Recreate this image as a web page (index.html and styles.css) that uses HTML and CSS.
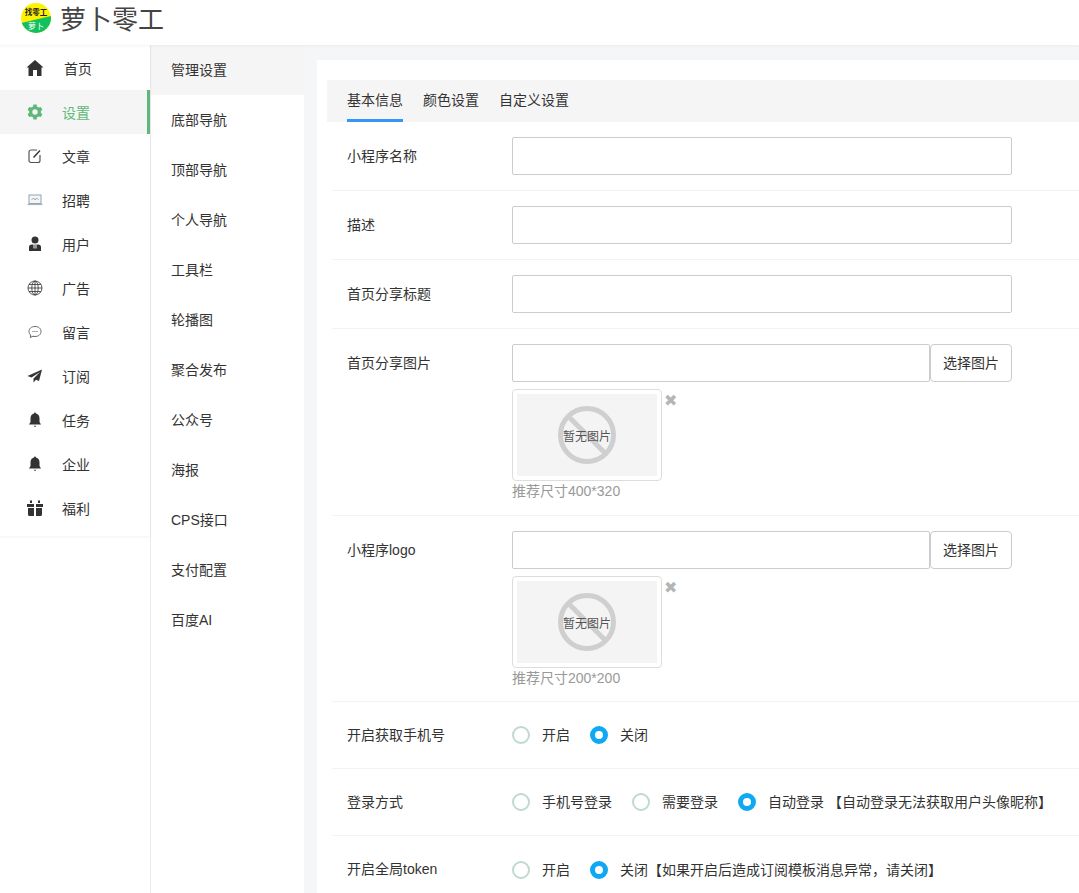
FILE: index.html
```html
<!DOCTYPE html>
<html lang="zh">
<head>
<meta charset="utf-8">
<title>萝卜零工</title>
<link rel="stylesheet" href="styles.css">
</head>
<body>
<header class="topbar">
  <svg class="logo" viewBox="0 0 30 30" width="30" height="30"><defs><clipPath id="c"><circle cx="15" cy="15" r="15"/></clipPath></defs><g clip-path="url(#c)"><rect width="30" height="30" fill="#fff200"/><path d="M0 20 30 13V30H0Z" fill="#12c05e"/></g><text x="15" y="12" class="logo-a">找零工</text><text x="15" y="26" class="logo-b">萝卜</text></svg>
  <span class="brand">萝卜零工</span>
</header>
<div class="shell">
  <nav class="nav1">
    <div class="nav1-list">
    <a class="nav1-item"><svg class="ico ico-home" viewBox="0 0 18 18"><path d="M9 1 0.500 8.500 2.500 8.500V17H7V11H11V17H15.500V8.500H17.500Z" fill="#333"/></svg><span class="home-label">首页</span></a>
    <a class="nav1-item active"><svg class="ico" viewBox="0 0 18 18"><path fill-rule="evenodd" d="M7.400 1.500h3.200l.5 2.200 1.600.9 2.100-.7 1.600 2.800-1.600 1.500v1.600l1.600 1.500-1.600 2.800-2.100-.7-1.600.9-.5 2.200H7.400l-.5-2.200-1.600-.9-2.100.7-1.600-2.800 1.600-1.500V8.200L1.600 6.700l1.600-2.800 2.100.7 1.600-.9ZM9 6.300a2.700 2.700 0 1 0 0 5.400 2.700 2.700 0 0 0 0-5.400Z" fill="#5fb878"/></svg><span>设置</span></a>
    <a class="nav1-item"><svg class="ico" viewBox="0 0 18 18"><path d="M14 8v5.500a2 2 0 0 1-2 2H5a2 2 0 0 1-2-2V5a2 2 0 0 1 2-2h6" fill="none" stroke="#555" stroke-width="1.200"/><path d="M7.500 10.500 14 3.500" stroke="#333" stroke-width="1.400"/></svg><span>文章</span></a>
    <a class="nav1-item"><svg class="ico" viewBox="0 0 18 18"><rect x="3" y="4" width="12" height="8.500" fill="#f3f6f8" stroke="#8fa3b5"/><path d="M1.500 13.500h15" stroke="#aab4bd" stroke-width="1.200"/><path d="M5.500 9 7.500 7 9 9 10.500 7 12.500 9" fill="none" stroke="#888" stroke-width=".7"/></svg><span>招聘</span></a>
    <a class="nav1-item"><svg class="ico" viewBox="0 0 18 18"><circle cx="9" cy="5" r="3.500" fill="#333"/><path d="M3 16V12Q3 9.500 6 9.500H7.500V13.500H8.500V9.500H9.500V13.500H10.500V9.500H12Q15 9.500 15 12V16Z" fill="#333"/></svg><span>用户</span></a>
    <a class="nav1-item"><svg class="ico" viewBox="0 0 18 18"><g fill="none" stroke="#444" stroke-width=".9"><circle cx="9" cy="9" r="7"/><ellipse cx="9" cy="9" rx="3.200" ry="7"/><path d="M9 2V16M2 9H16M3 5.500H15M3 12.500H15"/></g></svg><span>广告</span></a>
    <a class="nav1-item"><svg class="ico" viewBox="0 0 18 18"><path d="M9 3.500C5.400 3.500 3 5.600 3 8.500c0 1.400.6 2.600 1.700 3.500L4.300 14.500 7 13.200c.6.200 1.300.3 2 .3 3.600 0 6-2.100 6-5S12.600 3.500 9 3.500Z" fill="none" stroke="#666"/><path d="M6.500 8.500h1M8.500 8.500h1M10.500 8.500h1" stroke="#555"/></svg><span>留言</span></a>
    <a class="nav1-item"><svg class="ico" viewBox="0 0 18 18"><path d="M16 2.500 1.500 9 5.500 10.500 14 5 7.500 11.500V15.500L10 12.800 13 14Z" fill="#333"/></svg><span>订阅</span></a>
    <a class="nav1-item"><svg class="ico" viewBox="0 0 18 18"><path d="M9 1.500a1 1 0 0 1 1 1C12.500 3 13.500 5 13.500 7.500V11L15 13.500H3L4.500 11V7.500C4.500 5 5.500 3 8 2.500a1 1 0 0 1 1-1Z" fill="#333"/><path d="M7.500 14.800h3L9 16.300Z" fill="#555"/></svg><span>任务</span></a>
    <a class="nav1-item"><svg class="ico" viewBox="0 0 18 18"><path d="M9 1.500a1 1 0 0 1 1 1C12.500 3 13.500 5 13.500 7.500V11L15 13.500H3L4.500 11V7.500C4.500 5 5.500 3 8 2.500a1 1 0 0 1 1-1Z" fill="#333"/><path d="M7.500 14.800h3L9 16.300Z" fill="#555"/></svg><span>企业</span></a>
    <a class="nav1-item"><svg class="ico" viewBox="0 0 18 18"><path d="M1 5H8V8H1ZM10 5H17V8H10ZM2 9H8V17H3.500Q2 17 2 15.500ZM10 9H16V15.500Q16 17 14.500 17H10Z" fill="#333"/><path d="M5 1.500V4M13 1.500V4" stroke="#333" stroke-width="2"/></svg><span>福利</span></a>
    </div>
  </nav>
  <nav class="nav2">
    <a class="nav2-item current">管理设置</a>
    <a class="nav2-item">底部导航</a>
    <a class="nav2-item">顶部导航</a>
    <a class="nav2-item">个人导航</a>
    <a class="nav2-item">工具栏</a>
    <a class="nav2-item">轮播图</a>
    <a class="nav2-item">聚合发布</a>
    <a class="nav2-item">公众号</a>
    <a class="nav2-item">海报</a>
    <a class="nav2-item">CPS接口</a>
    <a class="nav2-item">支付配置</a>
    <a class="nav2-item">百度AI</a>
  </nav>
  <main class="content">
    <section class="card">
      <div class="tabs">
        <a class="tab on">基本信息</a>
        <a class="tab">颜色设置</a>
        <a class="tab">自定义设置</a>
      </div>
      <div class="row"><label class="lbl">小程序名称</label><div class="ctl"><input class="field"></div></div>
      <div class="row"><label class="lbl">描述</label><div class="ctl"><input class="field"></div></div>
      <div class="row"><label class="lbl">首页分享标题</label><div class="ctl"><input class="field"></div></div>
      <div class="row pic-row">
        <label class="lbl">首页分享图片</label>
        <div class="ctl">
          <div class="pick"><input class="field"><button class="pick-btn">选择图片</button></div>
          <div class="thumb-wrap">
            <div class="thumb"><div class="placeholder"><svg class="no-img" viewBox="0 0 60 60" width="60" height="60"><circle cx="30" cy="30" r="26.500" fill="none" stroke="#cfcfcf" stroke-width="5"/><path d="M11 11 49 49" stroke="#cfcfcf" stroke-width="5"/></svg><span class="no-txt">暂无图片</span></div></div>
            <span class="del">✖</span>
          </div>
          <div class="hint">推荐尺寸400*320</div>
        </div>
      </div>
      <div class="row pic-row pic-row-b">
        <label class="lbl">小程序logo</label>
        <div class="ctl">
          <div class="pick"><input class="field"><button class="pick-btn">选择图片</button></div>
          <div class="thumb-wrap">
            <div class="thumb"><div class="placeholder"><svg class="no-img" viewBox="0 0 60 60" width="60" height="60"><circle cx="30" cy="30" r="26.500" fill="none" stroke="#cfcfcf" stroke-width="5"/><path d="M11 11 49 49" stroke="#cfcfcf" stroke-width="5"/></svg><span class="no-txt">暂无图片</span></div></div>
            <span class="del">✖</span>
          </div>
          <div class="hint">推荐尺寸200*200</div>
        </div>
      </div>
      <div class="row radio-row"><label class="lbl">开启获取手机号</label><div class="ctl radios">
        <span class="opt"><i class="dot"></i>开启</span><span class="opt"><i class="dot sel"></i>关闭</span>
      </div></div>
      <div class="row radio-row"><label class="lbl">登录方式</label><div class="ctl radios">
        <span class="opt"><i class="dot"></i>手机号登录</span><span class="opt"><i class="dot"></i>需要登录</span><span class="opt"><i class="dot sel"></i>自动登录 【自动登录无法获取用户头像昵称】</span>
      </div></div>
      <div class="row radio-row last"><label class="lbl">开启全局token</label><div class="ctl radios">
        <span class="opt"><i class="dot"></i>开启</span><span class="opt"><i class="dot sel"></i>关闭【如果开启后造成订阅模板消息异常，请关闭】</span>
      </div></div>
    </section>
  </main>
</div>
</body>
</html>
```
FILE: styles.css
```css
* { box-sizing: border-box; }
html, body { margin: 0; height: 100%; overflow: hidden; }
body {
  font-family: "Liberation Sans", "Noto Sans CJK SC", Arial, sans-serif;
  font-size: 14px;
  color: #333;
  background: #f5f6f8;
  width: 1079px;
  height: 893px;
}
.topbar {
  height: 45px;
  background: #fff;
  display: flex;
  align-items: center;
  padding: 0 0 9px 21px;
  overflow: hidden;
  box-shadow: 0 1px 3px rgba(0, 0, 0, .05);
  position: relative;
  z-index: 2;
}
.logo { flex: none; }
.logo-a { font-size: 7.500px; font-weight: 700; text-anchor: middle; fill: #222; }
.logo-b { font-size: 8px; text-anchor: middle; fill: #fff; }
.brand { font-size: 26px; color: #444; margin-left: 9px; line-height: 36px; padding-top: 4px; }
.shell { display: flex; height: 848px; }
.nav1 {
  width: 150px;
  flex: none;
  background: #fff;
  position: relative;
  z-index: 1;
}
.nav1-list {
  height: 491px;
  padding-top: 1px;
  box-shadow: 0 1px 3px rgba(0, 0, 0, .05);
}
.nav1-item {
  height: 44px;
  display: flex;
  align-items: center;
  padding-left: 26px;
  color: #333;
}
.nav1-item span { margin-left: 18px; line-height: 20px; padding-top: 2px; }
.nav1-item .home-label { margin-left: 20px; }
.nav1-item.active { background: #f5f5f5; color: #5fb878; border-right: 3px solid #5fb878; }
.ico { width: 18px; height: 18px; flex: none; }
.nav2 {
  width: 154px;
  flex: none;
  background: #fff;
  border-left: 1px solid #e9eaec;
  position: relative;
  z-index: 0;
}
.nav2-item {
  display: flex;
  align-items: center;
  height: 50px;
  padding: 0 0 2px 20px;
  color: #333;
}
.nav2-item.current { background: #f5f5f5; }
.content { flex: 1; min-width: 0; padding: 15px 0 0 13px; overflow: hidden; }
.card { background: #fff; padding: 20px 0 0 10px; height: 833px; }
.tabs { height: 42px; background: #f5f5f5; display: flex; padding-left: 20px; gap: 20px; }
.tab { height: 42px; line-height: 40px; color: #333; }
.tab.on { border-bottom: 3px solid #3296fa; }
.row {
  display: flex;
  margin-left: 5px;
  padding: 15px 0;
  border-bottom: 1px solid #f2f4f4;
}
.lbl { width: 180px; flex: none; padding-left: 15px; line-height: 38px; color: #333; }
.ctl { width: 500px; flex: none; }
.field {
  display: block;
  width: 500px;
  height: 38px;
  border: 1px solid #ccc;
  border-radius: 2px;
  background: #fff;
  padding: 0 10px;
  outline: 0;
}
.pick { display: flex; width: 500px; }
.pick .field { flex: 1; width: auto; min-width: 0; }
.pick-btn {
  width: 82px;
  height: 38px;
  flex: none;
  border: 1px solid #ccc;
  border-radius: 4px;
  background: #fff;
  font: inherit;
  color: #333;
  padding: 0 0 2px;
}
.thumb-wrap { margin-top: 7px; display: flex; align-items: flex-start; }
.thumb { width: 150px; height: 92px; border: 1px solid #ddd; border-radius: 4px; padding: 4px; }
.placeholder { width: 140px; height: 82px; background: #f4f4f4; display: flex; align-items: center; justify-content: center; position: relative; }
.no-img { position: absolute; left: 40px; top: 11px; }
.no-txt { position: relative; font-size: 12px; color: #555; }
.del { font-size: 16px; line-height: 23px; color: #b5b5b5; margin-left: 2px; }
.hint { color: #999; line-height: 20px; }
.pic-row { padding-bottom: 14px; }
.pic-row-b { padding-bottom: 13px; }
.radio-row { padding: 14px 0; height: 67px; }
.radios { display: flex; width: auto; align-items: center; }
.opt { display: flex; align-items: center; margin-right: 20px; white-space: nowrap; line-height: 38px; }
.dot {
  width: 18px; height: 18px; border: 2px solid #bfd9d2; border-radius: 50%; margin-right: 12px; flex: none; background: #fff;
}
.dot.sel { border: 5.500px solid #0ea9f2; }
.last { border-bottom: 0; }
```
